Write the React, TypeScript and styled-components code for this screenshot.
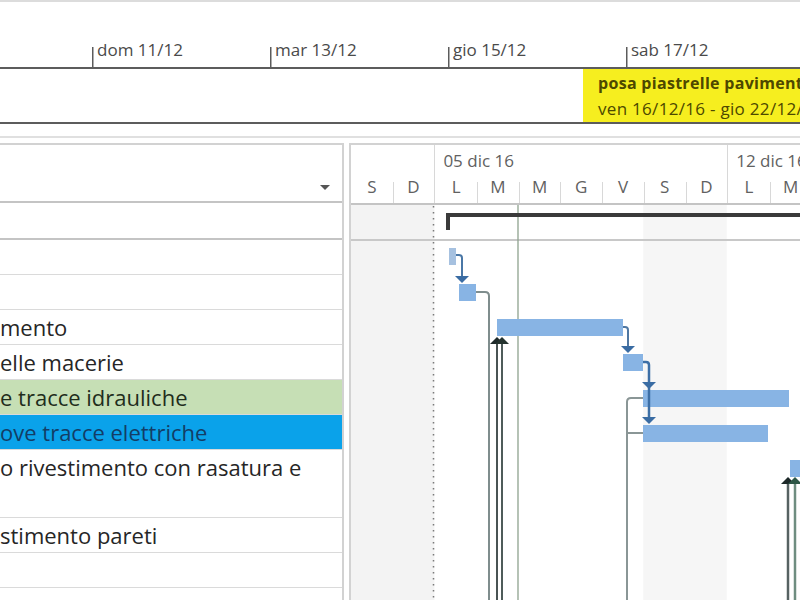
import React from 'react';
import styled, { createGlobalStyle } from 'styled-components';

const GlobalStyle = createGlobalStyle`
  html, body {
    margin: 0;
    padding: 0;
    background: #ffffff;
    overflow: hidden;
  }
  body {
    font-family: 'Open Sans', 'Noto Sans', sans-serif;
    color: #262626;
  }
`;

const DAY_W = 41.7;

const Page = styled.div`
  width: 800px;
  height: 600px;
  display: flex;
  flex-direction: column;
  overflow: hidden;
`;

/* ---------- timeline strip ---------- */

const Timeline = styled.section`
  border-top: 2px solid #dcdcdc;
  display: flex;
  flex-direction: column;
  overflow: hidden;
`;

const Scale = styled.div`
  height: 65px;
  display: flex;
  border-bottom: 2px solid #5c5c5c;
  white-space: nowrap;
`;

// the scale is scrolled: the first tick sits just off the left edge
const ScaleTrack = styled.div`
  display: flex;
  margin-left: -86px;
`;

const ScaleTick = styled.div`
  flex: 0 0 178px;
  align-self: flex-end;
  height: 27px;
  box-sizing: border-box;
  padding-left: 5px;
  font-size: 17px;
  line-height: 20px;
  color: #4a4a4a;
  background: linear-gradient(#5c5c5c, #5c5c5c) left bottom / 1.5px 20px no-repeat;
`;

const Lane = styled.div`
  height: 53px;
  display: flex;
  border-bottom: 2px solid #5c5c5c;
`;

const LaneTask = styled.div`
  margin-left: 583px;
  flex: 1;
  background: #f6ee1f;
  padding: 4px 0 0 15px;
  color: #4d4800;
  white-space: nowrap;
  overflow: hidden;
`;

const LaneTitle = styled.div`
  font-size: 16px;
  font-weight: 700;
  line-height: 20px;
  letter-spacing: 0.3px;
`;

const LaneDates = styled.div`
  margin-top: 6px;
  font-size: 17px;
  line-height: 20px;
  letter-spacing: 0.3px;
`;

const Splitter = styled.div`
  height: 12px;
  border-bottom: 2px solid #e0e0e0;
  margin-bottom: 5px;
`;

/* ---------- task sheet ---------- */

const Workspace = styled.div`
  flex: 1;
  display: flex;
  gap: 5px;
  min-height: 0;
`;

const Sheet = styled.div`
  flex: 0 0 344px;
  box-sizing: border-box;
  border-top: 2px solid #d2d2d2;
  border-right: 2px solid #d2d2d2;
  display: flex;
  flex-direction: column;
  overflow: hidden;
`;

const SheetHeader = styled.div`
  height: 58px;
  flex: 0 0 auto;
  border-bottom: 2px solid #c4c4c4;
  display: flex;
  justify-content: flex-end;
  align-items: flex-end;
  padding: 0 12px 11px 0;
  box-sizing: border-box;
`;

const FilterArrow = styled.span`
  width: 0;
  height: 0;
  border-left: 5px solid transparent;
  border-right: 5px solid transparent;
  border-top: 5px solid #555555;
`;

const SummaryRow = styled.div`
  height: 35px;
  flex: 0 0 auto;
  border-bottom: 2px solid #c4c4c4;
`;

type Tone = 'plain' | 'green' | 'blue';

const toneBg: Record<Tone, string> = {
  plain: '#ffffff',
  green: '#c6dfb5',
  blue: '#0aa2ea',
};

const toneText: Record<Tone, string> = {
  plain: '#262626',
  green: '#1f2d1c',
  blue: '#133d66',
};

const Row = styled.div<{ $tone: Tone; $tall?: boolean }>`
  flex: 0 0 auto;
  height: ${({ $tall }) => ($tall ? 67 : 34)}px;
  border-bottom: 1px solid #dadada;
  background: ${({ $tone }) => toneBg[$tone]};
  color: ${({ $tone }) => toneText[$tone]};
  font-size: 22px;
  line-height: 35px;
  white-space: nowrap;
  overflow: hidden;
`;

/* ---------- gantt chart ---------- */

const Chart = styled.div`
  flex: 1;
  border-top: 2px solid #d2d2d2;
  border-left: 2px solid #d2d2d2;
  display: flex;
  flex-direction: column;
  overflow: hidden;
`;

const ChartHeader = styled.div`
  height: 58px;
  flex: 0 0 auto;
  border-bottom: 2px solid #c4c4c4;
  display: flex;
  white-space: nowrap;
  color: #616161;
  font-size: 17px;
`;

const Week = styled.div<{ $first?: boolean }>`
  flex: 0 0 auto;
  display: flex;
  flex-direction: column;
  border-left: ${({ $first }) => ($first ? 'none' : '1px solid #d8d8d8')};
`;

const WeekLabel = styled.div`
  height: 26px;
  padding: 3px 0 0 8px;
  line-height: 26px;
`;

const Days = styled.div`
  flex: 1;
  display: flex;
`;

const Day = styled.div<{ $tick: boolean }>`
  flex: 0 0 ${DAY_W}px;
  text-align: center;
  line-height: 26px;
  background: ${({ $tick }) =>
    $tick ? 'linear-gradient(#d8d8d8, #d8d8d8) left bottom / 1px 21px no-repeat' : 'none'};
`;

const ChartBody = styled.svg`
  display: block;
  flex: 1;
`;

const rows: { text: string; tone: Tone; tall?: boolean }[] = [
  { text: '', tone: 'plain' },
  { text: '', tone: 'plain' },
  { text: 'mento', tone: 'plain' },
  { text: 'elle macerie', tone: 'plain' },
  { text: 'e tracce idrauliche', tone: 'green' },
  { text: 'ove tracce elettriche', tone: 'blue' },
  { text: 'o rivestimento con rasatura e', tone: 'plain', tall: true },
  { text: 'stimento pareti', tone: 'plain' },
  { text: '', tone: 'plain' },
  { text: '', tone: 'plain' },
];

const weeks = [
  { label: '', days: ['S', 'D'] },
  { label: '05 dic 16', days: ['L', 'M', 'M', 'G', 'V', 'S', 'D'] },
  { label: '12 dic 16', days: ['L', 'M', 'M', 'G', 'V', 'S', 'D'] },
];

const scaleLabels = ['ven 09/12', 'dom 11/12', 'mar 13/12', 'gio 15/12', 'sab 17/12', 'lun 19/12'];

const BAR = '#88b4e4';

const bars = [
  { x: 449, y: 248, w: 7, fill: '#a6c1e0' },
  { x: 459, y: 284, w: 17, fill: BAR },
  { x: 497, y: 319, w: 126, fill: BAR },
  { x: 623, y: 354, w: 20, fill: BAR },
  { x: 643, y: 390, w: 146, fill: BAR },
  { x: 643, y: 425, w: 125, fill: BAR },
  { x: 790, y: 460, w: 20, fill: BAR },
];

// downward arrow head with its tip at (x, y)
const down = (x: number, y: number) => `${x - 7},${y - 7} ${x + 7},${y - 7} ${x},${y}`;
// upward arrow head with its tip at (x, y)
const up = (x: number, y: number) => `${x - 7},${y + 7} ${x + 7},${y + 7} ${x},${y}`;

const GanttBody = () => (
  <ChartBody viewBox="351 205 449 395" preserveAspectRatio="xMinYMin slice">
    <rect x={351} y={205} width={83.4} height={395} fill="#f3f3f3" />
    <rect x={643.3} y={205} width={83.4} height={395} fill="#f6f6f6" />
    <line x1={351} y1={240} x2={800} y2={240} stroke="#c8c8c8" strokeWidth={2} />

    <line x1={433.5} y1={206} x2={433.5} y2={600} stroke="#7a7a7a" strokeWidth={1.5} strokeDasharray="1.5 4.5" />
    <line x1={518} y1={205} x2={518} y2={600} stroke="#8ea28e" strokeWidth={1.3} />

    {/* project summary */}
    <rect x={446} y={213} width={354} height={4} fill="#3a3a3a" />
    <rect x={446} y={213} width={4} height={17} fill="#3a3a3a" />

    {/* links running down the page */}
    <path d="M476 292 H485 Q489 292 489 296 V600" fill="none" stroke="#7f8d8d" strokeWidth={2} />
    <line x1={497} y1={343} x2={497} y2={600} stroke="#4a5454" strokeWidth={2} />
    <line x1={502} y1={343} x2={502} y2={600} stroke="#4f5c5a" strokeWidth={2} />
    <path d="M643 398 H631 Q627 398 627 402 V600" fill="none" stroke="#8a9696" strokeWidth={2} />
    <path d="M643 433 H627" fill="none" stroke="#8a9696" strokeWidth={2} />
    <line x1={788} y1={483} x2={788} y2={600} stroke="#566262" strokeWidth={2.5} />
    <line x1={795} y1={483} x2={795} y2={600} stroke="#6f8d80" strokeWidth={2.5} />

    {bars.map((b) => (
      <rect key={b.y} x={b.x} y={b.y} width={b.w} height={17} fill={b.fill} />
    ))}

    {/* predecessor chain */}
    <path d="M456 255 H459 Q462 255 462 258 V277" fill="none" stroke="#4a77a6" strokeWidth={2} />
    <polygon points={down(462, 283)} fill="#3a6ca3" />
    <path d="M623 327 H625 Q628 327 628 330 V347" fill="none" stroke="#4f77a2" strokeWidth={2} />
    <polygon points={down(628, 353)} fill="#3a6ca3" />
    <path d="M643 362 H646 Q649 362 649 365 V418" fill="none" stroke="#3d6fa6" strokeWidth={2.5} />
    <polygon points={down(649, 389)} fill="#3a6ca3" />
    <polygon points={down(649, 424)} fill="#3a6ca3" />

    <polygon points={up(497, 337)} fill="#1e2a2a" />
    <polygon points={up(502, 337)} fill="#25332f" />
    <polygon points={up(788, 477)} fill="#1c2828" />
    <polygon points={up(795, 477)} fill="#2d5646" />
  </ChartBody>
);

export default function App() {
  return (
    <Page>
      <GlobalStyle />
      <Timeline>
        <Scale>
          <ScaleTrack>
            {scaleLabels.map((l) => (
              <ScaleTick key={l}>{l}</ScaleTick>
            ))}
          </ScaleTrack>
        </Scale>
        <Lane>
          <LaneTask>
            <LaneTitle>posa piastrelle pavimenti</LaneTitle>
            <LaneDates>ven 16/12/16 - gio 22/12/16</LaneDates>
          </LaneTask>
        </Lane>
      </Timeline>
      <Splitter />
      <Workspace>
        <Sheet>
          <SheetHeader>
            <FilterArrow />
          </SheetHeader>
          <SummaryRow />
          {rows.map((r, i) => (
            <Row key={i} $tone={r.tone} $tall={r.tall}>
              {r.text}
            </Row>
          ))}
        </Sheet>
        <Chart>
          <ChartHeader>
            {weeks.map((w, i) => (
              <Week key={i} $first={i === 0}>
                <WeekLabel>{w.label}</WeekLabel>
                <Days>
                  {w.days.map((d, j) => (
                    <Day key={j} $tick={j > 0}>
                      {d}
                    </Day>
                  ))}
                </Days>
              </Week>
            ))}
          </ChartHeader>
          <GanttBody />
        </Chart>
      </Workspace>
    </Page>
  );
}
